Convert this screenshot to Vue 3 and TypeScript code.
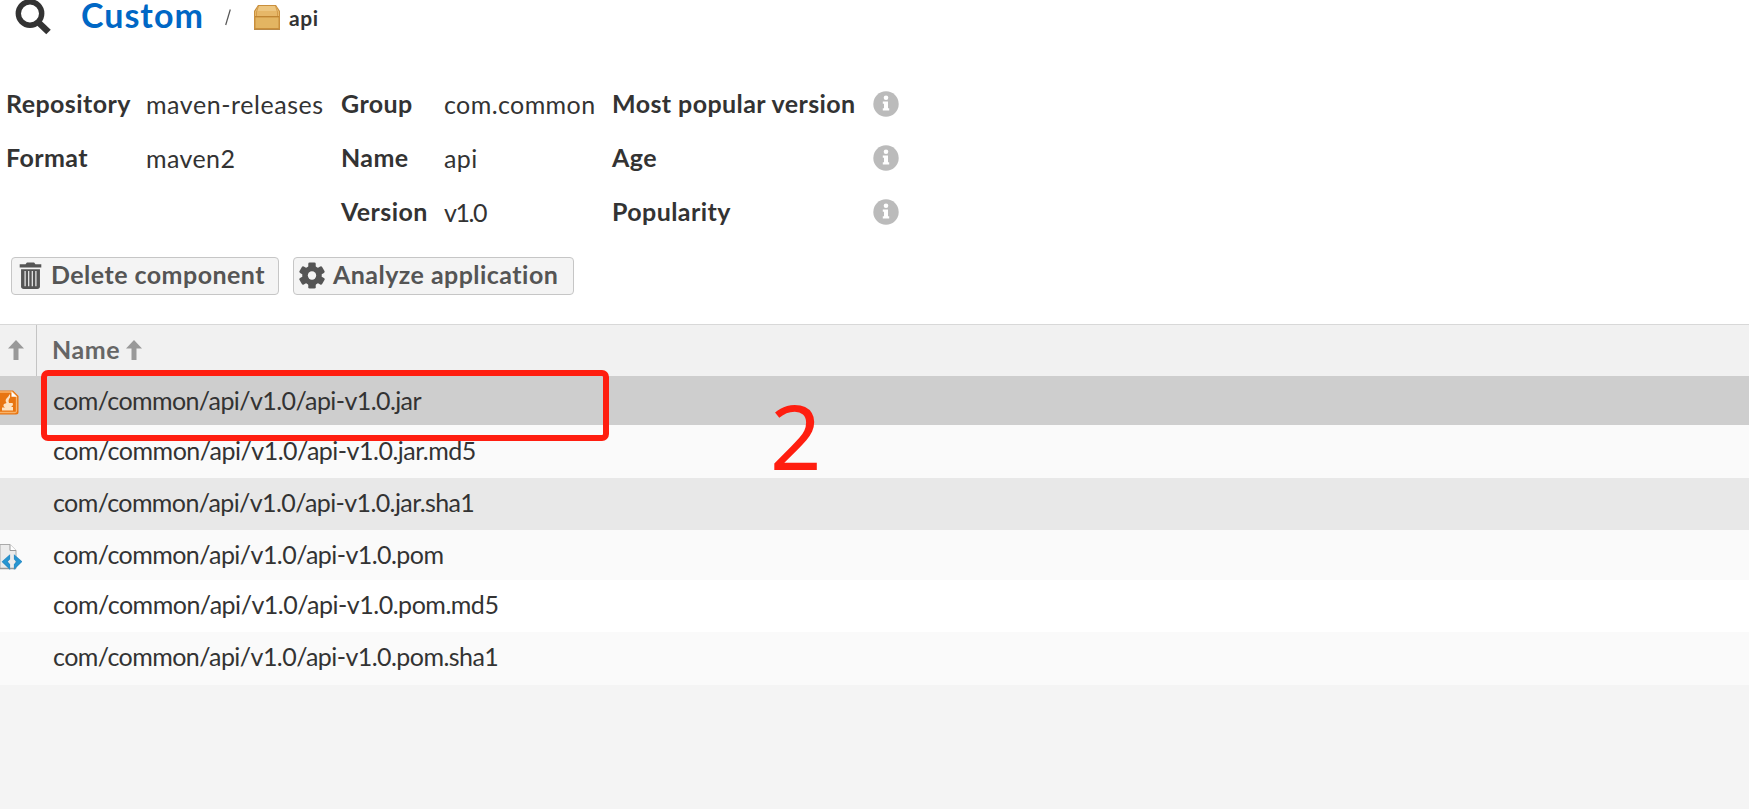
<script setup lang="ts">
import { ref } from 'vue';

interface Asset {
    path: string;
    kind: string;
    size: string;
}

const assets = ref<Asset[]>([
    { path: 'com/common/api/v1.0/api-v1.0.jar', kind: 'jar', size: 'r1' },
    { path: 'com/common/api/v1.0/api-v1.0.jar.md5', kind: '', size: 'r2' },
    { path: 'com/common/api/v1.0/api-v1.0.jar.sha1', kind: '', size: 'r3' },
    { path: 'com/common/api/v1.0/api-v1.0.pom', kind: 'xml', size: 'r4' },
    { path: 'com/common/api/v1.0/api-v1.0.pom.md5', kind: '', size: 'r5' },
    { path: 'com/common/api/v1.0/api-v1.0.pom.sha1', kind: '', size: 'r6' },
]);

const stats = ['Most popular version', 'Age', 'Popularity'];
</script>

<template>
    <div class="page">
        <header class="crumbs">
            <svg class="search" viewBox="0 0 36 36">
                <circle cx="15" cy="13.500" r="11.700" fill="none" stroke="#333" stroke-width="5.400" />
                <path d="M23.500 22.500L33.500 32" stroke="#333" stroke-width="6.500" />
            </svg>
            <h1>Custom</h1>
            <svg class="slash" viewBox="0 0 6 17"><path d="M5.300 .5L.7 16" stroke="#555" stroke-width="1.200" /></svg>
            <svg class="box" viewBox="0 0 26 26">
                <path d="M4 0H22L26 6V25H0V6Z" fill="#c98f3c" />
                <path d="M4.500 1H21.500L24.500 6H1.500Z" fill="#edc680" />
                <path d="M1 6H25V11H1Z" fill="#e6b768" />
                <path d="M1 11.500H25" stroke="#c08532" />
                <path d="M1.500 12.500H24.500V23H1.500Z" fill="#e3b562" />
                <path d="M4.500 1L2.500 7V11M21.500 1L23.500 7V11" fill="none" stroke="#d49c4a" />
                <path d="M0 24.500H26" stroke="#b98a49" />
            </svg>
            <span class="here">api</span>
        </header>

        <section class="info">
            <dl class="c1">
                <div><dt>Repository</dt><dd class="repo">maven-releases</dd></div>
                <div><dt>Format</dt><dd>maven2</dd></div>
            </dl>
            <dl class="c2">
                <div><dt>Group</dt><dd>com.common</dd></div>
                <div><dt>Name</dt><dd>api</dd></div>
                <div><dt>Version</dt><dd class="ver">v1.0</dd></div>
            </dl>
            <dl class="c3">
                <div v-for="s in stats" :key="s">
                    <dt>{{ s }}</dt>
                    <dd>
                        <svg class="tip" viewBox="0 0 26 26">
                            <circle cx="13" cy="13" r="12.700" fill="#bbb" />
                            <circle cx="13" cy="6.800" r="2.300" fill="#fff" />
                            <path d="M9.800 10.500H15V17.200H16.200V19.500H9.800V17.200H11V12.700H9.800Z" fill="#fff" />
                        </svg>
                    </dd>
                </div>
            </dl>
        </section>

        <div class="actions">
            <button class="del">
                <svg class="trash" viewBox="0 0 24 30">
                    <path d="M0 2.500H6.500L8 .5H16L17.500 2.500H24V6H0Z" fill="#555" />
                    <path d="M1.500 8H22.500V27Q22.500 30 19.500 30H4.500Q1.500 30 1.500 27Z" fill="#555" />
                    <path d="M6 10V27M10 10V27M14 10V27M18 10V27" stroke="#f4f4f4" stroke-width="1.300" />
                </svg>
                <span>Delete component</span>
            </button>
            <button class="ana">
                <svg class="gear" viewBox="-13 -14.500 26 29">
                    <g fill="#555">
                        <rect v-for="a in [0, 60, 120]" :key="a" x="-4" y="-14" width="8" height="28" rx="1.500" :transform="`rotate(${a})`" />
                    </g>
                    <circle r="7.500" fill="none" stroke="#555" stroke-width="6" />
                    <circle r="4.500" fill="#f4f4f4" />
                </svg>
                <span>Analyze application</span>
            </button>
        </div>

        <section class="grid">
            <div class="head">
                <div class="icol">
                    <svg class="arrow" viewBox="0 0 16 20"><path d="M8 0L16 8.500H10.500V20H5.500V8.500H0Z" fill="#999" /></svg>
                </div>
                <div class="ncol">
                    <span>Name</span>
                    <svg class="arrow" viewBox="0 0 16 20"><path d="M8 0L16 8.500H10.500V20H5.500V8.500H0Z" fill="#999" /></svg>
                </div>
            </div>
            <div v-for="a in assets" :key="a.path" class="row" :class="a.size">
                <div class="ricon">
                    <svg v-if="a.kind === 'jar'" class="jar" viewBox="0 0 19 25">
                        <path d="M0 .5H13L18.500 6V22Q18.500 24.500 16 24.500H0Z" fill="#e87511" />
                        <path d="M0 2H12L16.500 6.500V21Q16.500 22.500 15 22.500H0" fill="none" stroke="#f9b369" stroke-width="1.300" />
                        <path d="M11.500 1.500L17 6.700H11.500Z" fill="#fff" />
                        <path d="M9.500 4Q11 7 9 9Q8 11 9 13H12.500Q14 15 11 17H13V20.500H2V17.500H5Q2.500 16 4 14Q5.500 13.500 6.500 13Q4.500 10 7 8Q9 6.500 9.500 4Z" fill="#fde3c3" />
                    </svg>
                    <svg v-if="a.kind === 'xml'" class="xml" viewBox="0 0 22 26">
                        <path d="M0 .5H10L16 6.500V24.500H0Z" fill="#ececec" stroke="#aaa" />
                        <path d="M10 .5V6.500H16" fill="#fff" stroke="#999" />
                        <path d="M0 24.500H16" stroke="#999" stroke-width="1.500" />
                        <path d="M9.500 11.500L2.500 17.700L9.500 24.500V20.500L7 17.700L9.500 15ZM14.500 11.500L21.500 17.700L14.500 24.500V20.500L17 17.700L14.500 15Z" fill="#2697d3" stroke="#2a8fc9" stroke-width="1.200" />
                    </svg>
                </div>
                <span class="path">{{ a.path }}</span>
            </div>
            <div class="mark"></div>
            <div class="num">2</div>
        </section>
    </div>
</template>

<style>
body {
    margin: 0;
}
</style>

<style scoped>
.page {
    height: 809px;
    display: flex;
    flex-direction: column;
    background: #fff;
    color: #333;
    font-family: Lato, "Open Sans", sans-serif;
    font-size: 25px;
    white-space: nowrap;
    overflow: hidden;
}

.crumbs {
    height: 78px;
    display: flex;
    align-items: flex-start;
}

.search {
    width: 36px;
    height: 36px;
    margin-left: 15px;
}

h1 {
    margin: 0 0 0 30px;
    width: 144px;
    font-size: 34px;
    line-height: 30px;
    font-weight: 700;
    letter-spacing: 1px;
    color: #0067c5;
}

.slash {
    width: 6px;
    height: 17px;
    margin-top: 9px;
}

.box {
    width: 26px;
    height: 26px;
    margin: 5px 9px 0 23px;
}

.here {
    font-size: 21px;
    line-height: 35px;
    font-weight: 700;
    letter-spacing: 0.6px;
}

.info {
    height: 181px;
    display: flex;
}

dl {
    margin: 0;
}

dl div {
    display: flex;
    height: 54px;
    line-height: 51px;
}

dt {
    font-weight: 700;
    letter-spacing: 0.42px;
}

dd {
    margin: 1px 0 0;
    letter-spacing: 0.4px;
}

.repo {
    letter-spacing: 0.56px;
}

.ver {
    letter-spacing: -1.4px;
}

.c1 {
    width: 335px;
    padding-left: 6px;
}

.c1 dt {
    width: 140px;
}

.c2 {
    width: 271px;
}

.c2 dt {
    width: 103px;
}

.c3 dt {
    width: 261px;
}

.tip {
    display: block;
    width: 26px;
    height: 26px;
    margin-top: 12px;
}

.actions {
    height: 65px;
    display: flex;
    padding-left: 11px;
    flex: none;
    box-sizing: border-box;
    margin-top: -2px;
    padding-bottom: 0;
    margin-bottom: 2px;
}

button {
    height: 38px;
    box-sizing: border-box;
    display: flex;
    align-items: center;
    border: 1px solid #c6c6c6;
    border-radius: 4px;
    background: #f4f4f4;
    color: #555;
    font: 700 25px Lato, sans-serif;
    letter-spacing: 0.46px;
    padding: 0 0 4px 7px;
}

button svg {
    position: relative;
    top: 1px;
}

.del {
    width: 268px;
    margin-right: 14px;
}

.ana {
    width: 281px;
    padding-left: 5px;
}

.trash {
    width: 23px;
    height: 27px;
    margin-right: 9px;
}

.gear {
    width: 26px;
    height: 27px;
    margin-right: 8px;
}

.grid {
    position: relative;
    flex: 1;
    background: #f4f4f4;
}

.head {
    height: 52px;
    box-sizing: border-box;
    border-top: 1px solid #d8d8d8;
    background: #f1f1f1;
    display: flex;
    color: #666;
    font-weight: 700;
}

.icol {
    width: 37px;
    box-sizing: border-box;
    border-right: 1px solid #c4c4c4;
    padding: 15px 0 0 8px;
}

.arrow {
    display: block;
    width: 16px;
    height: 20px;
}

.ncol {
    display: flex;
    padding-left: 15px;
    line-height: 49px;
    letter-spacing: 0.6px;
}

.ncol .arrow {
    margin: 15px 0 0 6px;
}

.row {
    display: flex;
    background: #fafafa;
    letter-spacing: -0.55px;
}

.ricon {
    width: 53px;
}

.ricon svg {
    display: block;
}

.jar {
    width: 19px;
    height: 25px;
    margin-top: 14px;
}

.xml {
    width: 22px;
    height: 26px;
    margin-top: 14px;
}

.r1 {
    height: 49px;
    line-height: 48px;
    background: #cecece;
    letter-spacing: -0.59px;
}

.r2 {
    height: 53px;
    line-height: 50px;
    letter-spacing: -0.5px;
}

.r3 {
    height: 52px;
    line-height: 48px;
    background: #e8e8e8;
    letter-spacing: -0.6px;
}

.r4 {
    height: 50px;
    line-height: 48px;
}

.r5 {
    height: 52px;
    line-height: 48px;
    background: #fff;
    letter-spacing: -0.49px;
}

.r6 {
    height: 53px;
    line-height: 48px;
}

/* annotation drawn over the table */
.mark {
    position: absolute;
    left: 41px;
    top: 46px;
    width: 568px;
    height: 71px;
    box-sizing: border-box;
    border: 6px solid #ff1e10;
    border-radius: 7px;
}

.num {
    position: absolute;
    left: 770px;
    top: 61px;
    font: 90px/100px "Noto Sans", sans-serif;
    letter-spacing: 0;
    color: #ff1e10;
}
</style>
